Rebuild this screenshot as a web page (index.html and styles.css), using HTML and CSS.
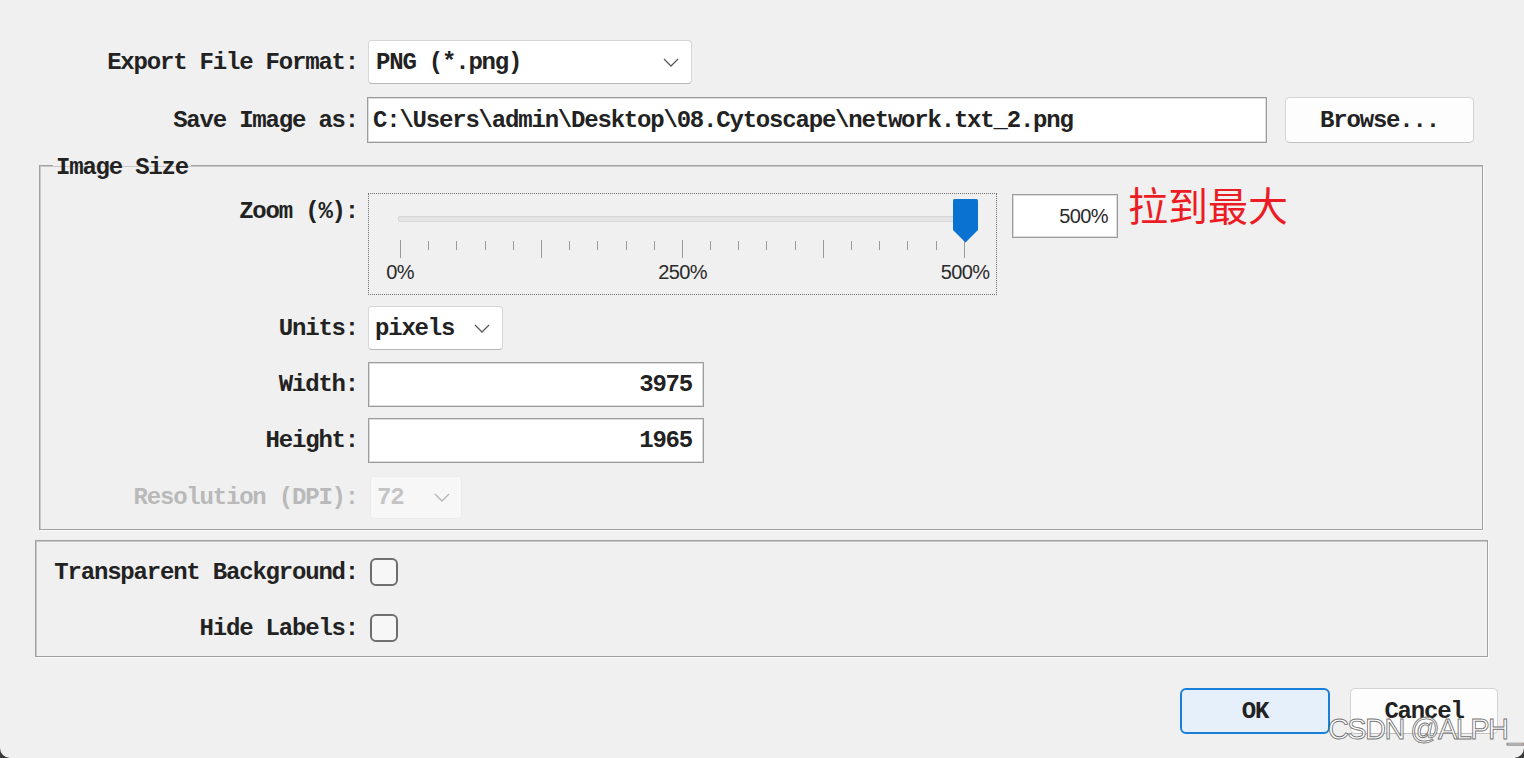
FILE: index.html
```html
<!DOCTYPE html>
<html>
<head>
<meta charset="utf-8">
<link rel="stylesheet" href="styles.css">
</head>
<body>
<div class="dialog">
  <div class="row row-format">
    <label class="label">Export File Format:</label>
    <div class="combo combo-format"><span>PNG (*.png)</span>
      <svg class="chev" width="16" height="9" viewBox="0 0 16 9"><path d="M1 1 L8 8 L15 1" /></svg>
    </div>
  </div>
  <div class="row row-save">
    <label class="label">Save Image as:</label>
    <div class="field field-path">C:\Users\admin\Desktop\08.Cytoscape\network.txt_2.png</div>
    <button class="btn btn-browse">Browse...</button>
  </div>

  <fieldset class="group group-size">
    <legend class="legend">Image Size</legend>
    <div class="grow row-zoom">
      <label class="glabel zoom-label">Zoom (%):</label>
      <div class="slider">
        <div class="track">
          <svg class="thumb" width="25" height="44" viewBox="0 0 25 44"><path d="M0 1.5 Q0 0 1.5 0 H23.5 Q25 0 25 1.5 V31 L12.5 43.5 L0 31 Z" /></svg>
        </div>
        <div class="ticks">
          <i class="major"></i><i></i><i></i><i></i><i></i>
          <i class="major"></i><i></i><i></i><i></i><i></i>
          <i class="major"></i><i></i><i></i><i></i><i></i>
          <i class="major"></i><i></i><i></i><i></i><i></i>
          <i class="major"></i>
        </div>
        <div class="tick-labels">
          <span>0%</span><span>250%</span><span>500%</span>
        </div>
      </div>
      <div class="field field-pct">500%</div>
      <div class="note">拉到最大</div>
    </div>
    <div class="grow row-units">
      <label class="glabel">Units:</label>
      <div class="combo combo-units"><span>pixels</span>
        <svg class="chev" width="16" height="9" viewBox="0 0 16 9"><path d="M1 1 L8 8 L15 1" /></svg>
      </div>
    </div>
    <div class="grow row-width">
      <label class="glabel">Width:</label>
      <div class="field field-num">3975</div>
    </div>
    <div class="grow row-height">
      <label class="glabel">Height:</label>
      <div class="field field-num">1965</div>
    </div>
    <div class="grow row-dpi">
      <label class="glabel disabled">Resolution (DPI):</label>
      <div class="combo combo-dpi"><span>72</span>
        <svg class="chev" width="16" height="9" viewBox="0 0 16 9"><path d="M1 1 L8 8 L15 1" /></svg>
      </div>
    </div>
  </fieldset>

  <div class="group group-opts">
    <div class="orow">
      <label class="olabel">Transparent Background:</label>
      <span class="check"></span>
    </div>
    <div class="orow">
      <label class="olabel">Hide Labels:</label>
      <span class="check"></span>
    </div>
  </div>

  <div class="buttons">
    <button class="btn btn-ok">OK</button>
    <button class="btn btn-cancel">Cancel</button>
  </div>

  <div class="watermark">CSDN @ALPH_</div>
</div>
</body>
</html>
```

FILE: styles.css
```css
* { box-sizing: border-box; }
html, body { margin: 0; padding: 0; }
body { background: #3a3a3a; width: 1524px; height: 758px; overflow: hidden; }

.dialog {
  position: relative;
  width: 1524px;
  height: 758px;
  background: #f0f0f0;
  border-radius: 0 0 10px 10px;
  padding-top: 40px;
  font-family: "Liberation Mono", "DejaVu Sans Mono", monospace;
  font-size: 24px;
  font-weight: bold;
  letter-spacing: -1.2px;
  color: #222;
}

.row { display: flex; align-items: center; }
.label { width: 358px; text-align: right; flex: none; }

.row-format { height: 44px; }
.row-save { height: 46px; margin-top: 13px; }

.combo {
  display: flex;
  align-items: center;
  justify-content: space-between;
  background: #fff;
  border: 1px solid #d6d6d6;
  border-bottom-color: #b8b8b8;
  border-radius: 4px;
  height: 44px;
  padding: 0 12px 0 7px;
  margin-left: 10px;
}
.chev { flex: none; }
.chev path { fill: none; stroke: #5a5a5a; stroke-width: 1.3; }

.combo-format { width: 324px; }

.field {
  display: flex;
  align-items: center;
  background: #fff;
  border: 1px solid #9c9c9c;
  box-shadow: inset 0 0 0 1px #dcdcdc;
  height: 100%;
  margin-left: 10px;
}
.field-path { width: 900px; padding-left: 5px; margin-left: 9px; }

.btn {
  font-family: inherit;
  font-size: 24px;
  font-weight: bold;
  letter-spacing: -1.2px;
  color: #222;
  background: #fdfdfd;
  border: 1px solid #d4d4d4;
  border-bottom-color: #c0c0c0;
  border-radius: 5px;
  padding: 0;
}
.btn-browse { width: 189px; height: 46px; margin-left: 18px; }

/* group boxes */
.group {
  border: 1px solid #a0a0a0;
  box-shadow: inset 1px 1px 0 #c8c8c8, 1px 1px 0 #fafafa;
}
.group-size {
  margin: 6px 0 0 39px;
  width: 1444px;
  min-width: 0;
  padding: 12px 0 10px 0;
}
.legend {
  margin-left: 13px;
  padding: 6px 3px 0 3px;
  line-height: 26px;
  height: 32px;
}

.grow { display: flex; align-items: center; }
.glabel { width: 318px; text-align: right; flex: none; }

.row-zoom { align-items: flex-start; height: 102px; }
.zoom-label { line-height: 30px; margin-top: 4px; }

.slider {
  width: 629px;
  height: 102px;
  margin-left: 10px;
  border: 1px dotted #707070;
  padding: 22px 31px 0 31px;
  flex: none;
}
.track {
  position: relative;
  height: 6px;
  margin: 0 -11px 0 -2px;
  background: #e4e4e4;
  border: 1px solid #d6d6d6;
  border-radius: 2px;
}
.thumb {
  position: absolute;
  left: 554px;
  top: -18px;
}
.thumb path { fill: #0a72d1; }

.ticks {
  display: flex;
  justify-content: space-between;
  align-items: flex-start;
  height: 18px;
  margin-top: 18px;
}
.ticks i { display: block; width: 1px; height: 9px; background: #9a9a9a; margin-top: 1px; }
.ticks i.major { height: 18px; margin-top: 0; }

.tick-labels {
  display: flex;
  justify-content: space-between;
  margin-top: 3px;
  height: 22px;
  line-height: 22px;
  font-family: "Liberation Sans", "DejaVu Sans", sans-serif;
  font-size: 20px;
  font-weight: normal;
  letter-spacing: -0.6px;
  color: #2a2a2a;
}
.tick-labels span { width: 0; display: flex; justify-content: center; white-space: nowrap; }

.field-pct {
  width: 106px;
  height: 44px;
  margin: 1px 0 0 15px;
  justify-content: flex-end;
  padding-right: 9px;
  font-family: "Liberation Sans", "DejaVu Sans", sans-serif;
  font-size: 20px;
  font-weight: normal;
  letter-spacing: -0.6px;
  color: #2a2a2a;
}
.note {
  margin: -11px 0 0 10px;
  font-family: "Noto Sans CJK SC", sans-serif;
  font-size: 40px;
  font-weight: normal;
  line-height: 44px;
  letter-spacing: 0;
  color: #ec1c24;
}

.row-units { height: 44px; margin-top: 11px; }
.combo-units { width: 135px; padding: 0 12px 0 6px; }

.row-width { height: 45px; margin-top: 12px; }
.row-height { height: 45px; margin-top: 11px; }
.field-num {
  width: 336px;
  justify-content: flex-end;
  padding-right: 11px;
}

.row-dpi { height: 43px; margin-top: 13px; }
.disabled { color: #b9b9b9; }
.combo-dpi {
  width: 92px;
  height: 43px;
  margin-left: 12px;
  background: #f7f7f7;
  border-color: #ececec;
  color: #c4c4c4;
  padding: 0 11px 0 6px;
}
.combo-dpi .chev path { stroke: #b5b5b5; }

.group-opts {
  margin: 10px 0 0 35px;
  width: 1453px;
  height: 117px;
  padding: 17px 0 0 0;
  display: flex;
  flex-direction: column;
  gap: 28px;
}
.orow { display: flex; align-items: center; height: 28px; }
.olabel { width: 322px; text-align: right; flex: none; }
.check {
  width: 28px;
  height: 28px;
  margin-left: 12px;
  border: 2px solid #6e6e6e;
  border-radius: 6px;
  background: #f7f7f7;
}

.buttons {
  display: flex;
  justify-content: flex-end;
  gap: 20px;
  margin-top: 31px;
  padding-right: 26px;
}
.btn-ok {
  width: 150px;
  height: 46px;
  background: #e6f0fa;
  border: 2px solid #1a7fd8;
  border-radius: 6px;
}
.btn-cancel {
  width: 148px;
  height: 46px;
}

.watermark {
  position: absolute;
  left: 1328px;
  top: 713px;
  white-space: nowrap;
  font-family: "Liberation Sans", "DejaVu Sans", sans-serif;
  font-size: 29px;
  font-weight: normal;
  letter-spacing: -1.6px;
  color: rgba(255, 255, 255, 0.85);
  -webkit-text-stroke: 0.9px rgba(90, 90, 90, 0.85);
}
```
